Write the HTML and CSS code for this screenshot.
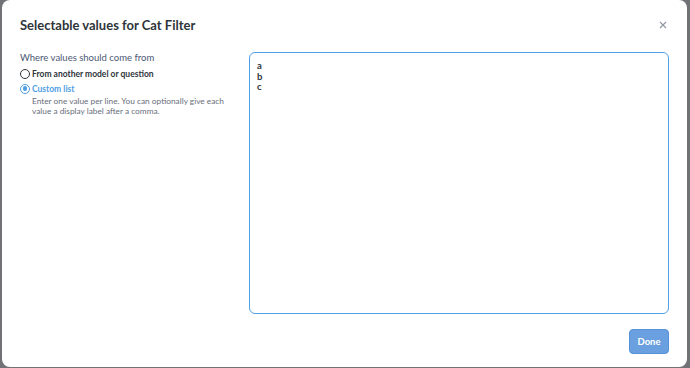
FILE: index.html
```html
<!DOCTYPE html>
<html>
<head>
<meta charset="utf-8">
<link rel="stylesheet" href="styles.css">
</head>
<body>
<div class="modal">
  <div class="header">
    <h1 class="title">Selectable values for Cat Filter</h1>
    <button class="close" aria-label="Close">
      <svg width="8" height="8" viewBox="0 0 8 8"><path d="M1 1L7 7M7 1L1 7" stroke="#8f95a3" stroke-width="1.1" fill="none"/></svg>
    </button>
  </div>
  <div class="body">
    <div class="sidebar">
      <div class="label">Where values should come from</div>
      <label class="radio">
        <span class="circle"></span>
        <span class="radio-text">From another model or question</span>
      </label>
      <label class="radio checked">
        <span class="circle"><span class="dot"></span></span>
        <span class="radio-text">Custom list</span>
      </label>
      <p class="hint">Enter one value per line. You can optionally give each value a display label after a comma.</p>
    </div>
    <div class="editor">
      <div class="line">a</div>
      <div class="line">b</div>
      <div class="line">c</div>
    </div>
  </div>
  <div class="footer">
    <button class="done">Done</button>
  </div>
</div>
</body>
</html>
```
FILE: styles.css
```css
html, body {
  margin: 0;
  padding: 0;
  height: 100%;
}
body {
  background: #707275;
  font-family: Lato, "Noto Sans", sans-serif;
  color: #2e353b;
  padding: 0 3px 1px 2px;
  box-sizing: border-box;
}
.modal {
  background: #fff;
  height: 367px;
  border-radius: 8px;
  box-sizing: border-box;
  padding: 15px 18px 13px 18px;
  display: flex;
  flex-direction: column;
}
.header {
  display: flex;
  align-items: center;
  justify-content: space-between;
  height: 20px;
}
.title {
  margin: 0;
  font-size: 13px;
  font-weight: 700;
  color: #2e353b;
}
.close {
  border: 0;
  background: none;
  padding: 0;
  margin-right: 1px;
  width: 10px;
  height: 10px;
  display: flex;
  align-items: center;
  justify-content: center;
}
.body {
  display: flex;
  flex: 1;
  margin-top: 17px;
  gap: 12px;
}
.sidebar {
  width: 217px;
  flex: none;
}
.label {
  font-size: 9.5px;
  color: #4c5773;
  line-height: 12px;
  margin-bottom: 2px;
}
.radio {
  display: flex;
  align-items: center;
  gap: 2px;
  font-size: 8.5px;
  font-weight: 700;
  color: #2e353b;
  height: 15px;
}
.radio.checked {
  color: #509ee3;
}
.circle {
  width: 8px;
  height: 8px;
  border: 1.4px solid #2e353b;
  border-radius: 50%;
  display: flex;
  align-items: center;
  justify-content: center;
  flex: none;
}
.radio.checked .circle {
  border-color: #509ee3;
}
.dot {
  width: 4.5px;
  height: 4.5px;
  border-radius: 50%;
  background: #509ee3;
}
.hint {
  margin: -0.5px 0 0 12px;
  font-size: 8.3px;
  line-height: 10.5px;
  color: #696e7b;
}
.editor {
  flex: 1;
  border: 1px solid #509ee3;
  border-radius: 6px;
  padding: 8px 7px;
  font-size: 9.5px;
  font-weight: 700;
  line-height: 10.5px;
  color: #2e353b;
}
.footer {
  display: flex;
  justify-content: flex-end;
  margin-top: 15px;
}
.done {
  width: 40px;
  height: 25px;
  border: 1px solid #5692d8;
  border-radius: 4px;
  background: #6a9fe0;
  color: #fff;
  font-family: Lato, "Noto Sans", sans-serif;
  font-weight: 700;
  font-size: 9.5px;
  padding: 0;
}
```
